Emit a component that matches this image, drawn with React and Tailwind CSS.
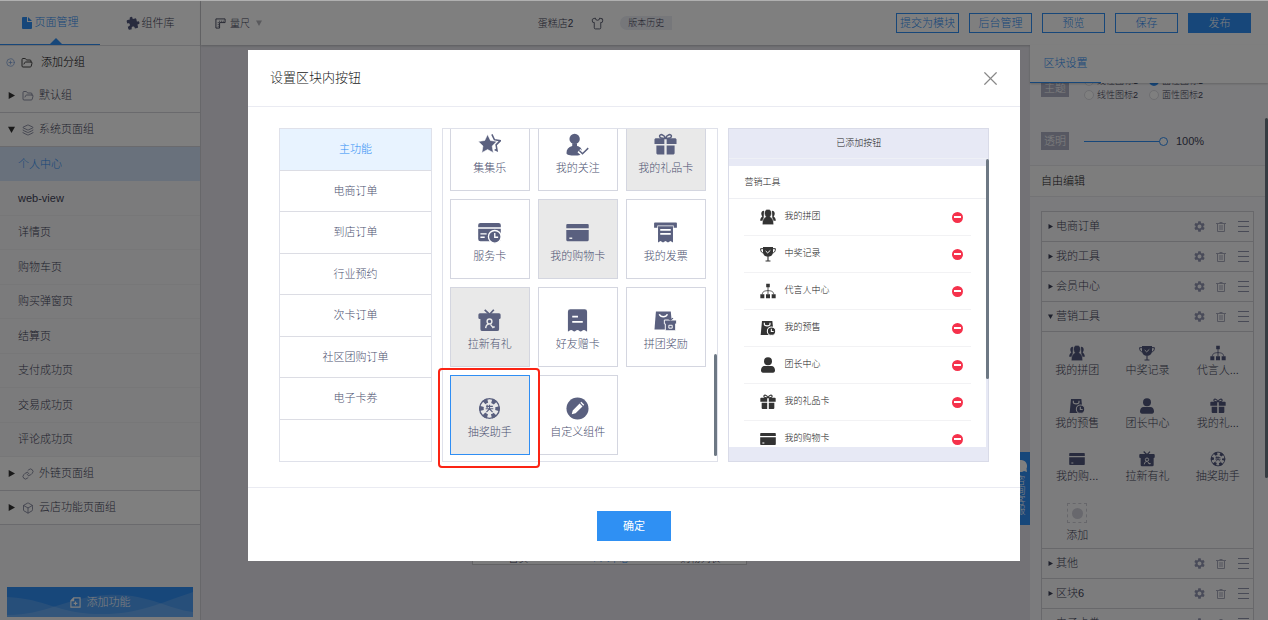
import { useState } from "react";
import { Box, CirclePlus, FolderOpen, Layers, Link, Shirt, X } from "lucide-react";
import { MdExtension, MdSettings } from "react-icons/md";
import clsx from "clsx";

// Solid 24x24 glyphs. Cut-outs are painted with --cut, the colour of the surface behind.
const GLYPHS = {
  stars: (
    <>
      <path d="M14.500 1.500l2.700 5.600 6.200.9-4.500 4.400 1 6.100-2.500-1.300" fill="none" stroke="currentColor" strokeWidth="1.600" />
      <path d="M10 1.500l3 6.300 6.700 1-4.900 4.800 1.200 6.900L10 17.300l-6 3.200 1.200-6.900L.3 8.800l6.700-1z" stroke="var(--cut)" strokeWidth=".6" />
    </>
  ),
  userCheck: (
    <>
      <circle cx="9" cy="6.200" r="5.400" />
      <path d="M6.500 11h5v2.500c4 .8 5.500 3.400 5.500 7.500 0 1.500-3.500 2.500-8 2.500S.5 22.500.5 21c0-4.100 2-6.700 6-7.500z" />
      <path d="M13.500 18.500l3.700 3.300 6-6.300" fill="none" stroke="var(--cut)" strokeWidth="4.500" />
      <path d="M13.800 18.300l3.400 3.300 6-5.800" fill="none" stroke="currentColor" strokeWidth="1.500" />
    </>
  ),
  user: (
    <>
      <circle cx="12" cy="6.500" r="6" />
      <path d="M7 13.500h10c3.500 0 5.500 3 5.500 6.500 0 2-1 3.500-3 3.500h-15c-2 0-3-1.500-3-3.500 0-3.500 2-6.500 5.500-6.500z" />
    </>
  ),
  people: (
    <>
      <path d="M6 2.500c-3 0-4.500 2.500-4 5.500.2 1.500.8 2.500 1.500 3.200C1.500 12.500.3 14.500.3 17.500h5zM18 2.500c3 0 4.500 2.500 4 5.500-.2 1.500-.8 2.500-1.500 3.200 2 1.300 3.200 3.300 3.200 6.300h-5z" />
      <path d="M12 .5c-3.500 0-5.600 2.600-5.300 6.200.2 2.200 1 3.800 2.100 4.900-3.300 1.600-5.300 4.900-5.300 10.400 0 1 .5 1.500 1.500 1.500h14c1 0 1.500-.5 1.500-1.500 0-5.500-2-8.800-5.300-10.400 1.100-1.100 1.900-2.700 2.100-4.900C17.600 3.100 15.500.5 12 .5z" stroke="var(--cut)" strokeWidth=".8" />
    </>
  ),
  gift: (
    <>
      <path d="M12 5.500C10.500 1.500 6 .5 5.800 3.300 5.700 5 8 5.700 12 5.700zm0 0C13.500 1.500 18 .5 18.200 3.300 18.300 5 16 5.700 12 5.700z" fill="none" stroke="currentColor" strokeWidth="1.600" />
      <path d="M1.500 5.500h9.300v6H.5v-5zM13.200 5.500h9.300l1 1v5H13.200zM2.500 13h8.300v9.500H3.500l-1-1zM13.200 13h8.300v8.500l-1 1h-7.300z" />
    </>
  ),
  card: (
    <>
      <path d="M1.500 3h21a1.200 1.200 0 011.200 1.200V7.500H.3V4.200A1.200 1.200 0 011.500 3zM.3 9.300h23.400v10.500a1.200 1.200 0 01-1.200 1.200h-21a1.200 1.200 0 01-1.200-1.200z" />
      <path d="M3.500 18h3" stroke="var(--cut)" strokeWidth="1.600" />
    </>
  ),
  cardClock: (
    <>
      <path d="M2.500 2h19A2.300 2.300 0 0123.800 4.300V6.500H.2V4.300A2.300 2.300 0 012.500 2zM.2 8h23.600v10.700a2.300 2.300 0 01-2.300 2.300h-19A2.300 2.300 0 01.2 18.700z" />
      <path d="M2.500 13.500h6.500M2.500 17h4.500" stroke="var(--cut)" strokeWidth="1.400" />
      <circle cx="17.500" cy="16.500" r="6.600" stroke="var(--cut)" strokeWidth="1.400" />
      <path d="M17.500 12.500v4.500h3.500" fill="none" stroke="var(--cut)" strokeWidth="1.400" />
    </>
  ),
  invoice: (
    <>
      <path d="M1 1.500h22a.9.9 0 01.9.9v4.700h-3.400V4.800h-17v2.300H.1V2.400a.9.900 0 01.9-.9z" />
      <path d="M4.200 5.500h15.600V22.500l-2.600-1.700-2.600 1.700-2.600-1.700-2.600 1.700-2.600-1.700-2.600 1.700z" />
      <path d="M6.500 9.300h11M6.500 13.500h11" stroke="var(--cut)" strokeWidth="1.700" />
    </>
  ),
  giftUser: (
    <>
      <path d="M7 .8l4.500 4.400M16.500.8L12.500 5.200" stroke="currentColor" strokeWidth="1.800" />
      <path d="M2 4.500h20a1.600 1.600 0 011.600 1.600V9a1.500 1.500 0 01-1.600 1.500V21a2 2 0 01-2 2H4.500a2 2 0 01-2-2V10.500H2A1.500 1.500 0 01.4 9V6.100A1.600 1.600 0 012 4.500z" />
      <circle cx="12" cy="13" r="2.500" fill="none" stroke="var(--cut)" strokeWidth="1.500" />
      <path d="M8 20c.3-2.800 1.800-4.500 4-4.500M13 16l3 4M14.500 18.800h3" fill="none" stroke="var(--cut)" strokeWidth="1.500" />
    </>
  ),
  receipt: (
    <>
      <path d="M4.500.3h15A2.500 2.500 0 0122 2.800V23.500c-1.300 0-1.600-1.500-3.300-1.500s-2 1.500-3.400 1.500S13.700 22 12 22s-2 1.500-3.300 1.500S7 22 5.300 22 3.300 23.500 2 23.500V2.800A2.500 2.500 0 014.500.3z" />
      <path d="M6.500 8h6M6.500 13.500h11" stroke="var(--cut)" strokeWidth="1.800" />
    </>
  ),
  bagGift: (
    <>
      <path d="M2 2.500h15.500l1.800 19H.5z" />
      <path d="M5.500 5.500c1.500 3.500 7 3.500 8.500 0" fill="none" stroke="var(--cut)" strokeWidth="1.500" />
      <path d="M10.800 11.500h12.800v4h-1V22.700H11.800V15.500h-1z" stroke="var(--cut)" strokeWidth="1" />
      <path d="M14.500 9.500l2.700 2 2.700-2" fill="none" stroke="currentColor" strokeWidth="1.200" />
      <path d="M15.500 17h3.500v3h-3.500z" fill="none" stroke="var(--cut)" strokeWidth="1" />
    </>
  ),
  bagClock: (
    <>
      <path d="M3 1.500h15.500l2.200 21H1z" />
      <path d="M6.500 4v2.500c0 3 8.500 3 8.500 0V4" fill="none" stroke="var(--cut)" strokeWidth="1.700" />
      <circle cx="17.300" cy="16.800" r="6.300" stroke="var(--cut)" strokeWidth="1.600" />
      <path d="M17 13.300v3.900h3.500" fill="none" stroke="var(--cut)" strokeWidth="1.600" />
    </>
  ),
  trophy: (
    <>
      <path d="M4.500 4H.9c0 4.500 1.600 6.500 5.600 6.500M19.500 4h3.600c0 4.500-1.600 6.500-5.600 6.500" fill="none" stroke="currentColor" strokeWidth="1.500" />
      <path d="M4.500 1.500h15v7c0 4.500-3 7.500-7.500 7.500S4.500 13 4.500 8.500z" />
      <path d="M8.500 7.500l3 2.800 4-3.800" fill="none" stroke="var(--cut)" strokeWidth="1.500" />
      <path d="M12 15.500V22M8.300 22.500h7.400" stroke="currentColor" strokeWidth="1.700" />
    </>
  ),
  org: (
    <>
      <path d="M9.300 1h5.400v5.400H9.300zM.5 17h6v6h-6zM9 17h6v6H9zM17.500 17h6v6h-6z" />
      <path d="M12 6v11M3.500 17c0-3.500 2.500-5.500 8.500-5.500s8.500 2 8.500 5.500" fill="none" stroke="currentColor" strokeWidth="1.200" />
    </>
  ),
  lottery: (
    <>
      <circle cx="12" cy="12" r="10.300" fill="none" stroke="currentColor" strokeWidth="1.400" />
      <circle cx="12" cy="12" r="8.400" fill="none" stroke="currentColor" strokeWidth="4.600" strokeDasharray="4.400 4.396" strokeDashoffset="2.200" />
      <path d="M8.500 9.800h7M8 12.300h8M12 8v4.300M12 12.300l-3.200 3.400M12 12.300l3.200 3.400M9.500 8v3.500" fill="none" stroke="currentColor" strokeWidth="1.200" />
    </>
  ),
  pencil: (
    <>
      <circle cx="12" cy="12" r="11.500" />
      <path d="M6 18l1-4 7.200-7.200 3 3L10 17zM15 6l1-1 3 3-1 1z" fill="var(--cut)" />
    </>
  ),
};

function Glyph({ name, className }) {
  return (
    <svg viewBox="0 0 24 24" fill="currentColor" aria-hidden="true" className={clsx("shrink-0", className)}>
      {GLYPHS[name]}
    </svg>
  );
}

const Caret = ({ open, className }) => (
  <svg viewBox="0 0 10 10" fill="currentColor" aria-hidden="true" className={clsx("shrink-0", open && "rotate-90", className)}>
    <path d="M1 0l9 5-9 5z" />
  </svg>
);

const pages = ["个人中心", "web-view", "详情页", "购物车页", "购买弹窗页", "结算页", "支付成功页", "交易成功页", "评论成功页"];

const categories = ["主功能", "电商订单", "到店订单", "行业预约", "次卡订单", "社区团购订单", "电子卡券"];

const widgets = [
  { icon: "stars", label: "集集乐" },
  { icon: "userCheck", label: "我的关注" },
  { icon: "gift", label: "我的礼品卡", used: true },
  { icon: "cardClock", label: "服务卡" },
  { icon: "card", label: "我的购物卡", used: true },
  { icon: "invoice", label: "我的发票" },
  { icon: "giftUser", label: "拉新有礼", used: true },
  { icon: "receipt", label: "好友赠卡" },
  { icon: "bagGift", label: "拼团奖励" },
  { icon: "lottery", label: "抽奖助手", used: true, active: true },
  { icon: "pencil", label: "自定义组件" },
];

const added = [
  { icon: "people", label: "我的拼团" },
  { icon: "trophy", label: "中奖记录" },
  { icon: "org", label: "代言人中心" },
  { icon: "bagClock", label: "我的预售" },
  { icon: "user", label: "团长中心" },
  { icon: "gift", label: "我的礼品卡" },
  { icon: "card", label: "我的购物卡" },
];

const blockButtons = [
  { icon: "people", label: "我的拼团" },
  { icon: "trophy", label: "中奖记录" },
  { icon: "org", label: "代言人..." },
  { icon: "bagClock", label: "我的预售" },
  { icon: "user", label: "团长中心" },
  { icon: "gift", label: "我的礼..." },
  { icon: "card", label: "我的购..." },
  { icon: "giftUser", label: "拉新有礼" },
  { icon: "lottery", label: "抽奖助手" },
];

function GroupRow({ icon: Icon, label, open }) {
  return (
    <button className="flex h-[34px] w-full shrink-0 items-center border-b border-[#d4d4da] bg-white pl-2 text-left">
      <Caret open={open} className="size-[7px] text-[#333]" />
      <Icon className="ml-[7px] size-3 text-[#6a6e88]" strokeWidth={1.5} />
      <span className="ml-[5px]">{label}</span>
    </button>
  );
}

function Sidebar() {
  return (
    <aside className="flex w-[201px] shrink-0 flex-col border-r border-[#cfcfd4] bg-[#f7f7f8]">
      <div className="flex h-[45px] shrink-0 border-b border-[#dcdce0] bg-white">
        <button className="relative flex w-[100px] items-center justify-center gap-[3px] border-b border-[#2f8ef4] text-[#2f8ef4]">
          <svg viewBox="0 0 10 12" fill="currentColor" className="h-3 w-2.5" aria-hidden="true">
            <path d="M0 1a1 1 0 011-1h4v5h5v6a1 1 0 01-1 1H1a1 1 0 01-1-1zM6 0l4 4H6z" />
          </svg>
          页面管理
          <svg viewBox="0 0 12 6" fill="currentColor" className="absolute bottom-0 left-[50px] h-1.5 w-3" aria-hidden="true">
            <path d="M6 0l6 6H0z" />
          </svg>
        </button>
        <button className="flex w-[100px] items-center justify-center gap-0.5">
          <MdExtension className="size-[14px] -rotate-12 text-[#50567c]" />
          组件库
        </button>
      </div>
      <button className="flex h-[33px] shrink-0 items-center bg-white pl-1.5 text-left text-black">
        <CirclePlus className="size-[9px] text-[#7da0d8]" strokeWidth={2} />
        <FolderOpen className="ml-1.5 size-3 text-[#444]" strokeWidth={2} />
        <span className="ml-2">添加分组</span>
      </button>
      <GroupRow icon={FolderOpen} label="默认组" />
      <GroupRow icon={Layers} label="系统页面组" open />
      <ul className="grid h-[310px] shrink-0 auto-rows-fr">
        {pages.map((p, i) => (
          <li key={p} className={clsx("flex", i === 0 ? "bg-[#d3e3f8] text-[#2f8ef4]" : "border-b border-[#eeeef1]")}>
            <button className="flex-1 pl-[18px] text-left">{p}</button>
          </li>
        ))}
      </ul>
      <GroupRow icon={Link} label="外链页面组" />
      <GroupRow icon={Box} label="云店功能页面组" />
      <button className="relative mx-[7px] mt-auto mb-[3px] flex h-[30px] shrink-0 items-center justify-center gap-1.5 bg-[#2f8ef4] text-white">
        <svg viewBox="0 0 186 30" preserveAspectRatio="none" className="absolute inset-0 size-full" aria-hidden="true">
          <path d="M0 10C40 12 50 26 90 27s60-10 96-22v25H0z" fill="#fff" fillOpacity=".15" />
          <path d="M0 28c40 0 60-18 100-20s60 14 86 17v5H0z" fill="#fff" fillOpacity=".15" />
        </svg>
        <svg viewBox="0 0 12 12" fill="none" stroke="currentColor" strokeWidth="1.2" className="relative size-[11px]" aria-hidden="true">
          <path d="M4 1h7v10H1V4zM4 1v3H1M6 5v4M4 7h4" />
        </svg>
        <span className="relative">添加功能</span>
      </button>
    </aside>
  );
}

function Toolbar() {
  return (
    <header className="relative z-10 flex h-11 shrink-0 items-center justify-between bg-white pr-[17px] pl-3.5 shadow-[0_1px_2px_rgba(0,0,0,0.2)]">
      <button className="flex items-center gap-1 text-[10px]">
        <svg viewBox="0 0 12 12" fill="none" stroke="currentColor" className="size-[11px]" aria-hidden="true">
          <path d="M1 1h10v4H5v6H1zM3 5h1M3 7h1M3 9h1M5 3v1M7 3v1M9 3v1" />
        </svg>
        量尺
        <Caret open className="ml-0.5 size-1.5 text-[#b4b4ba]" />
      </button>
      <div className="flex items-center pl-[52px] text-[10px]">
        <span>蛋糕店2</span>
        <Shirt className="ml-[18px] size-[13px]" strokeWidth={1.5} />
        <button className="ml-4 h-[14px] rounded-l-full bg-[#eceef5] px-2 text-[9px] leading-[14px]">版本历史</button>
      </div>
      <div className="flex gap-2.5 text-[11px] text-[#2f8ef4]">
        {["提交为模块", "后台管理", "预览", "保存"].map((b) => (
          <button key={b} className="h-5 w-[63px] border border-[#2f8ef4] whitespace-nowrap">
            {b}
          </button>
        ))}
        <button className="h-5 w-[63px] bg-[#2f8ef4] text-white">发布</button>
      </div>
    </header>
  );
}

function BlockRow({ label, open }) {
  return (
    <div className="flex h-[30px] items-center border-b border-[#d0d0d6] pr-1 pl-1.5">
      <Caret open={open} className="size-[5px] text-[#3c4058]" />
      <span className="ml-[3px] flex-1">{label}</span>
      <button aria-label="设置">
        <MdSettings className="size-[13px] text-[#9396b2]" />
      </button>
      <button aria-label="删除" className="ml-2.5 text-[#a8aabd]">
        <svg viewBox="0 0 10 10" fill="none" stroke="currentColor" className="size-2.5" aria-hidden="true">
          <path d="M0 1.500h10M1.500 1.500v8h7v-8M4 3v5M6 3v5M3.500.5h3" />
        </svg>
      </button>
      <button aria-label="排序" className="ml-3 text-[#9094ac]">
        <svg viewBox="0 0 11 11" stroke="currentColor" className="size-[11px]" aria-hidden="true">
          <path d="M0 .5h11M0 5.500h11M0 10.500h11" />
        </svg>
      </button>
    </div>
  );
}

function SettingsPanel() {
  return (
    <aside className="relative z-10 flex w-[238px] shrink-0 flex-col bg-[#f7f7fa]">
      <div className="z-10 flex h-[38px] shrink-0 bg-white shadow-[0_1px_2px_rgba(0,0,0,0.2)]">
        <button className="w-[71px] border-b border-[#2f8ef4] text-[#2f8ef4]">区块设置</button>
      </div>
      <div className="min-h-0 flex-1 overflow-hidden">
        <div className="-mt-[9px]">
          <fieldset className="flex items-center pl-[11px]">
            <span className="h-[18px] w-7 bg-[#aeb0c4] text-center leading-[18px] text-white">主题</span>
            <div className="ml-[15px] grid grid-cols-[65px_65px] text-[9px] leading-[14px]">
              {["线性图标1", "面性图标1", "线性图标2", "面性图标2"].map((t, i) => (
                <label key={t} className="flex items-center gap-[3px]">
                  <input
                    type="radio"
                    name="theme"
                    defaultChecked={i === 1}
                    className="size-2.5 appearance-none rounded-full border border-[#dcdce2] bg-white checked:border-[3px] checked:border-[#2f8ef4]"
                  />
                  {t}
                </label>
              ))}
            </div>
          </fieldset>
          <div className="mt-[30px] flex items-center pl-[11px]">
            <label htmlFor="opacity" className="h-[18px] w-7 bg-[#aeb0c4] text-center leading-[18px] text-white">
              透明
            </label>
            <input
              id="opacity"
              type="range"
              defaultValue="100"
              className="ml-[15px] h-2.5 w-[84px] appearance-none bg-transparent bg-[linear-gradient(#2f8ef4,#2f8ef4)] bg-[length:100%_1px] bg-center bg-no-repeat [&::-webkit-slider-thumb]:size-[9px] [&::-webkit-slider-thumb]:appearance-none [&::-webkit-slider-thumb]:rounded-full [&::-webkit-slider-thumb]:border [&::-webkit-slider-thumb]:border-[#2f8ef4] [&::-webkit-slider-thumb]:bg-white"
            />
            <span className="ml-2">100%</span>
          </div>
          <h2 className="mt-[15px] border-y border-[#e6e6ea] bg-[#fafafb] pl-[11px] leading-[30px] text-[#222]">自由编辑</h2>
          <div className="mt-3.5 mr-3.5 ml-[11px] border border-[#d0d0d6] bg-[#f9f9fb]">
            <BlockRow label="电商订单" />
            <BlockRow label="我的工具" />
            <BlockRow label="会员中心" />
            <BlockRow label="营销工具" open />
            <div className="grid grid-cols-3 gap-y-5 border-b border-[#d0d0d6] pt-[13px] pb-[5px] text-center leading-4">
              {blockButtons.map(({ icon, label }) => (
                <div key={label} className="flex flex-col items-center gap-px">
                  <Glyph name={icon} className="size-4 text-[#50567c] [--cut:#f7f7fa]" />
                  {label}
                </div>
              ))}
              <button className="flex flex-col items-center gap-1">
                <span className="-mt-px flex size-5 items-center justify-center border border-dashed border-[#cfcfd6]">
                  <span className="size-[11px] rounded-full bg-[#d0d0da]" />
                </span>
                添加
              </button>
            </div>
            <BlockRow label="其他" />
            <BlockRow label="区块6" />
            <BlockRow label="电子卡券" />
          </div>
        </div>
      </div>
      <div className="absolute top-[73px] right-0 h-[360px] w-[3px] rounded bg-[#6d7884]" />
    </aside>
  );
}

function Canvas() {
  return (
    <main className="relative flex flex-1 flex-col items-center bg-[#e6e5ec] pt-5 pr-3 pb-[55px]">
      <div className="flex w-[275px] flex-1 flex-col justify-end border border-[#c4c4c8] bg-[#f7f7f8]">
        <nav className="grid grid-cols-3 text-center text-[10px] leading-[10px]">
          <a href="#home">首页</a>
          <a href="#me" className="text-[#2f8ef4]">个人中心</a>
          <a href="#list">购物列表</a>
        </nav>
      </div>
      <button className="absolute top-[407px] right-0 flex h-[73px] w-[19px] flex-col items-center gap-1 bg-[#2f8ef4] pt-2 text-[10px] leading-[10px] text-white">
        <svg viewBox="0 0 12 12" fill="currentColor" className="size-3 shrink-0" aria-hidden="true">
          <path d="M6 0a6 6 0 015.500 8.500L12 12l-3-1A6 6 0 116 0z" />
        </svg>
        <span className="w-2.5">咨询客服</span>
      </button>
    </main>
  );
}

function ButtonDialog() {
  const [category, setCategory] = useState("主功能");

  return (
    <div className="fixed inset-x-0 top-px bottom-0 z-20 flex items-start justify-center bg-black/50 pt-[49px]">
      <section role="dialog" aria-label="设置区块内按钮" className="w-[772px] bg-white text-[#4c5170]">
        <div className="flex h-[57px] items-center justify-between border-b border-[#eaebf2] pr-[18px] pl-[22px]">
          <h1 className="text-[13px] text-[#222]">设置区块内按钮</h1>
          <button aria-label="关闭" className="text-[#888]">
            <X className="size-[23px]" strokeWidth={1.25} />
          </button>
        </div>

        <div className="flex border-b border-[#eaebf2] px-[31px] pt-[21px] pb-[25px]">
          <div className="grid h-[334px] w-[153px] auto-rows-fr border border-[#dfe1ea]">
            {categories.map((c) => (
              <button
                key={c}
                onClick={() => setCategory(c)}
                className={clsx("border-b border-[#dcdde4]", c === category && "bg-[#e8f3ff] text-[#2f8ef4]")}
              >
                {c}
              </button>
            ))}
            <div />
          </div>

          <div className="relative ml-2.5 h-[334px] w-[277px]">
            <div className="flex h-full flex-col justify-end overflow-hidden border border-[#dfe1ea] pb-1.5 pl-[7px]">
              <div className="grid grid-cols-[repeat(3,80px)] gap-2">
                {widgets.map(({ icon, label, used, active }) => (
                  <button
                    key={label}
                    className={clsx(
                      "flex h-20 flex-col items-center border pt-[21px] leading-4 whitespace-nowrap",
                      used ? "bg-[#e9e9e9] [--cut:#e9e9e9]" : "[--cut:#fff]",
                      active ? "border-[#2f8ef4]" : "border-[#d4d6e0]",
                    )}
                  >
                    <Glyph name={icon} className="mb-1 size-[23px] text-[#5a607f]" />
                    {label}
                  </button>
                ))}
              </div>
            </div>
            <div className="absolute right-px bottom-1.5 h-[102px] w-[3px] rounded bg-[#6d7884]" />
            <div className="absolute -bottom-1.5 -left-1 h-[100px] w-[102px] rounded border-2 border-[#fb2414]" />
          </div>

          <div className="relative ml-2.5 flex h-[334px] w-[261px] flex-col border border-[#d9dbe8] bg-[#e7e9f5] text-[9px] text-[#222]">
            <h2 className="border-b border-[#eef0f6] text-center leading-[29px]">已添加按钮</h2>
            <div className="mt-[7px] mr-0.5 mb-3.5 min-h-0 flex-1 overflow-hidden bg-white">
              <h3 className="border-b border-[#eeeff3] pl-[15px] leading-8">营销工具</h3>
              <ul className="mr-[15px] ml-[15px]">
                {added.map(({ icon, label }) => (
                  <li key={label} className="flex h-[37px] items-center border-b border-[#f2f2f4] pr-2 pl-4">
                    <Glyph name={icon} className="size-4 text-[#333] [--cut:#fff]" />
                    <span className="ml-2 flex-1">{label}</span>
                    <button aria-label={`删除${label}`} className="flex size-[11px] items-center justify-center rounded-full bg-[#f5314b]">
                      <span className="h-0.5 w-[7px] bg-white" />
                    </button>
                  </li>
                ))}
              </ul>
            </div>
            <div className="absolute top-[30px] -right-px h-[220px] w-[3px] rounded bg-[#6d7884]" />
          </div>
        </div>

        <div className="flex justify-center pt-[23px] pb-5">
          <button className="h-[30px] w-[74px] bg-[#2f90f3] font-normal text-white">确定</button>
        </div>
      </section>
    </div>
  );
}

export default function App() {
  return (
    <div className="flex h-screen overflow-hidden border-t border-[#b0b0b0] bg-white font-['Liberation_Sans','Noto_Sans_CJK_SC',sans-serif] text-[11px] font-light text-[#3f4358]">
      <Sidebar />
      <div className="flex min-w-0 flex-1 flex-col">
        <Toolbar />
        <div className="flex min-h-0 flex-1">
          <Canvas />
          <SettingsPanel />
        </div>
      </div>
      <ButtonDialog />
    </div>
  );
}
